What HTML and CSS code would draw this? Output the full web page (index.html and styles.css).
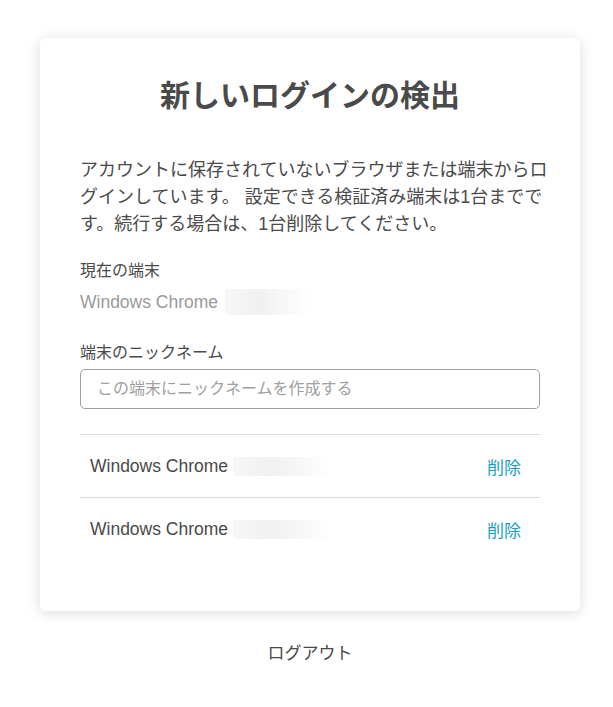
FILE: index.html
```html
<!DOCTYPE html>
<html lang="ja">
<head>
  <meta charset="UTF-8">
  <title>新しいログインの検出</title>
  <meta name="viewport" content="width=device-width, initial-scale=1.0">
  <link rel="stylesheet" href="styles.css">
</head>
<body>
  <div class="pagina">
    <div class="cartao">
      <h1 class="titulo">新しいログインの検出</h1>
      <p class="aviso">アカウントに保存されていないブラウザまたは端末からログインしています。 設定できる検証済み端末は1台までです。続行する場合は、1台削除してください。</p>

      <div class="rotulo">現在の端末</div>
      <div class="atual">Windows Chrome <span class="borrao"></span></div>

      <label class="rotulo rotulo-apelido" for="apelido">端末のニックネーム</label>
      <input type="text" id="apelido" placeholder="この端末にニックネームを作成する">

      <ul class="lista">
        <li class="item">
          <span class="nome">Windows Chrome <span class="borrao borrao-item"></span></span>
          <a class="remover" href="#">削除</a>
        </li>
        <li class="item">
          <span class="nome">Windows Chrome <span class="borrao borrao-item"></span></span>
          <a class="remover" href="#">削除</a>
        </li>
      </ul>
    </div>
    <div class="sair"><a href="#">ログアウト</a></div>
  </div>
</body>
</html>
```

FILE: styles.css
```css
body {
  font-family: "Liberation Sans", "Noto Sans CJK JP", sans-serif;
  background: #fff;
  color: #4a4a4a;
  margin: 0;
}
.pagina {
  width: 540px;
  margin: 38px 0 0 40px;
}
.cartao {
  background: #fff;
  border-radius: 6px;
  box-shadow: 0 2px 14px rgba(0, 0, 0, 0.14);
  padding: 38px 40px 51px;
}
.titulo {
  font-size: 30px;
  line-height: 40px;
  font-weight: bold;
  text-align: center;
  margin: 0;
  color: #4a4a4a;
}
.aviso {
  font-size: 18px;
  line-height: 27px;
  margin: 41px -10px 0 0;
  color: #4a4a4a;
}
.rotulo {
  display: block;
  font-size: 16px;
  line-height: 24px;
  margin-top: 21px;
  color: #4a4a4a;
}
.rotulo-apelido {
  margin-top: 26px;
}
.atual {
  font-size: 17.5px;
  line-height: 24px;
  margin-top: 6px;
  color: #9a9a9a;
  display: flex;
  align-items: center;
}
.borrao {
  display: inline-block;
  width: 84px;
  height: 26px;
  margin-left: 7px;
  background: linear-gradient(to right, #f7f7f7, #f0f0f0 40%, #fff);
}
.borrao-item {
  width: 98px;
  height: 19px;
  margin-left: 5px;
}
input {
  display: block;
  box-sizing: border-box;
  width: 100%;
  height: 40px;
  margin-top: 4px;
  padding: 0 16px;
  font-family: inherit;
  font-size: 16px;
  color: #4a4a4a;
  border: 1px solid #9e9e9e;
  border-radius: 5px;
  outline: none;
}
input::placeholder {
  color: #a0a0a0;
}
.lista {
  list-style: none;
  margin: 25px 0 0;
  padding: 0;
}
.item {
  display: flex;
  justify-content: space-between;
  align-items: center;
  height: 62px;
  padding: 0 19px 0 10px;
  border-top: 1px solid #ddd;
}
.nome {
  display: flex;
  align-items: center;
  font-size: 17.5px;
  color: #4a4a4a;
}
.remover {
  font-size: 17px;
  color: #16a0c6;
  text-decoration: none;
}
.sair {
  text-align: center;
  margin-top: 31px;
  font-size: 17px;
  line-height: 24px;
}
.sair a {
  color: #4a4a4a;
  text-decoration: none;
}
```
